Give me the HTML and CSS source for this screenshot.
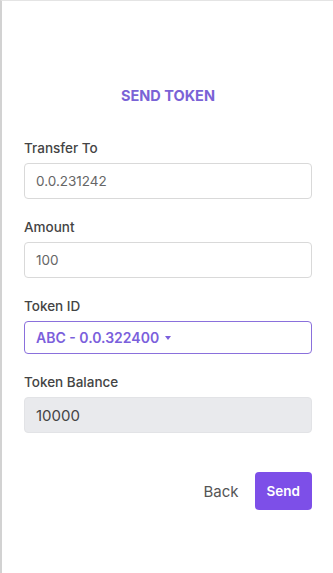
FILE: index.html
```html
<!DOCTYPE html>
<html lang="en">
<head>
    <meta charset="UTF-8">
    <meta name="viewport" content="width=device-width, initial-scale=1.0">
    <title>Send Token</title>
    <link rel="stylesheet" href="styles.css">
</head>
<body>
    <div class="page">
        <h2 class="title">SEND TOKEN</h2>

        <form class="send-form">
            <div class="field">
                <label for="transfer-to">Transfer To</label>
                <input type="text" id="transfer-to" class="input" value="0.0.231242">
            </div>
            <div class="field">
                <label for="amount">Amount</label>
                <input type="text" id="amount" class="input" value="100">
            </div>
            <div class="field">
                <label>Token ID</label>
                <div class="token-select">
                    <span>ABC - 0.0.322400</span>
                    <span class="caret"></span>
                </div>
            </div>
            <div class="field">
                <label for="balance">Token Balance</label>
                <input type="text" id="balance" class="input disabled" value="10000" disabled>
            </div>

            <div class="actions">
                <button type="button" class="btn-back">Back</button>
                <button type="submit" class="btn-send">Send</button>
            </div>
        </form>
    </div>
</body>
</html>
```

FILE: styles.css
```css
body {
    margin: 0;
    padding: 0;
    font-family: Inter, "Liberation Sans", Arial, sans-serif;
    background-color: #fff;
}
.page {
    box-sizing: border-box;
    height: 573px;
    border-left: 2px solid #d2d2d2;
    border-top: 1px solid #e4e4e4;
    padding: 85px 21px 0 22px;
}
.title {
    margin: 0;
    text-align: center;
    font-size: 14.5px;
    line-height: 20px;
    font-weight: 700;
    color: #7a63d6;
}
.send-form {
    margin-top: 32px;
}
.field {
    margin-bottom: 18px;
}
.field label {
    display: block;
    font-size: 13.5px;
    line-height: 20px;
    font-weight: 500;
    color: #444;
    margin-bottom: 5px;
}
.input {
    box-sizing: border-box;
    display: block;
    width: 100%;
    height: 36px;
    padding: 0 11px;
    border: 1px solid #d9d9d9;
    border-radius: 4px;
    font-family: inherit;
    font-size: 13.5px;
    color: #666;
    background-color: #fff;
    outline: none;
}
.input.disabled {
    background-color: #e9eaed;
    border-color: #e2e3e6;
    color: #444;
    font-size: 15px;
}
.token-select {
    box-sizing: border-box;
    display: flex;
    align-items: center;
    height: 33px;
    padding: 0 11px;
    border: 1px solid #8a70dc;
    border-radius: 4px;
    font-size: 14px;
    font-weight: 600;
    color: #7b5fdc;
}
.caret {
    margin-left: 6px;
    width: 0;
    height: 0;
    border-left: 3.5px solid transparent;
    border-right: 3.5px solid transparent;
    border-top: 4px solid #7b5fdc;
}
.actions {
    display: flex;
    justify-content: flex-end;
    align-items: center;
    margin-top: 39px;
}
.btn-back {
    border: none;
    background: none;
    font-family: inherit;
    font-size: 15px;
    color: #555;
    padding: 0;
    margin-right: 16px;
}
.btn-send {
    height: 38px;
    padding: 0 12px;
    border: none;
    border-radius: 4px;
    background-color: #7d4fe8;
    color: #fff;
    font-family: inherit;
    font-size: 13.5px;
    font-weight: 600;
}
```
